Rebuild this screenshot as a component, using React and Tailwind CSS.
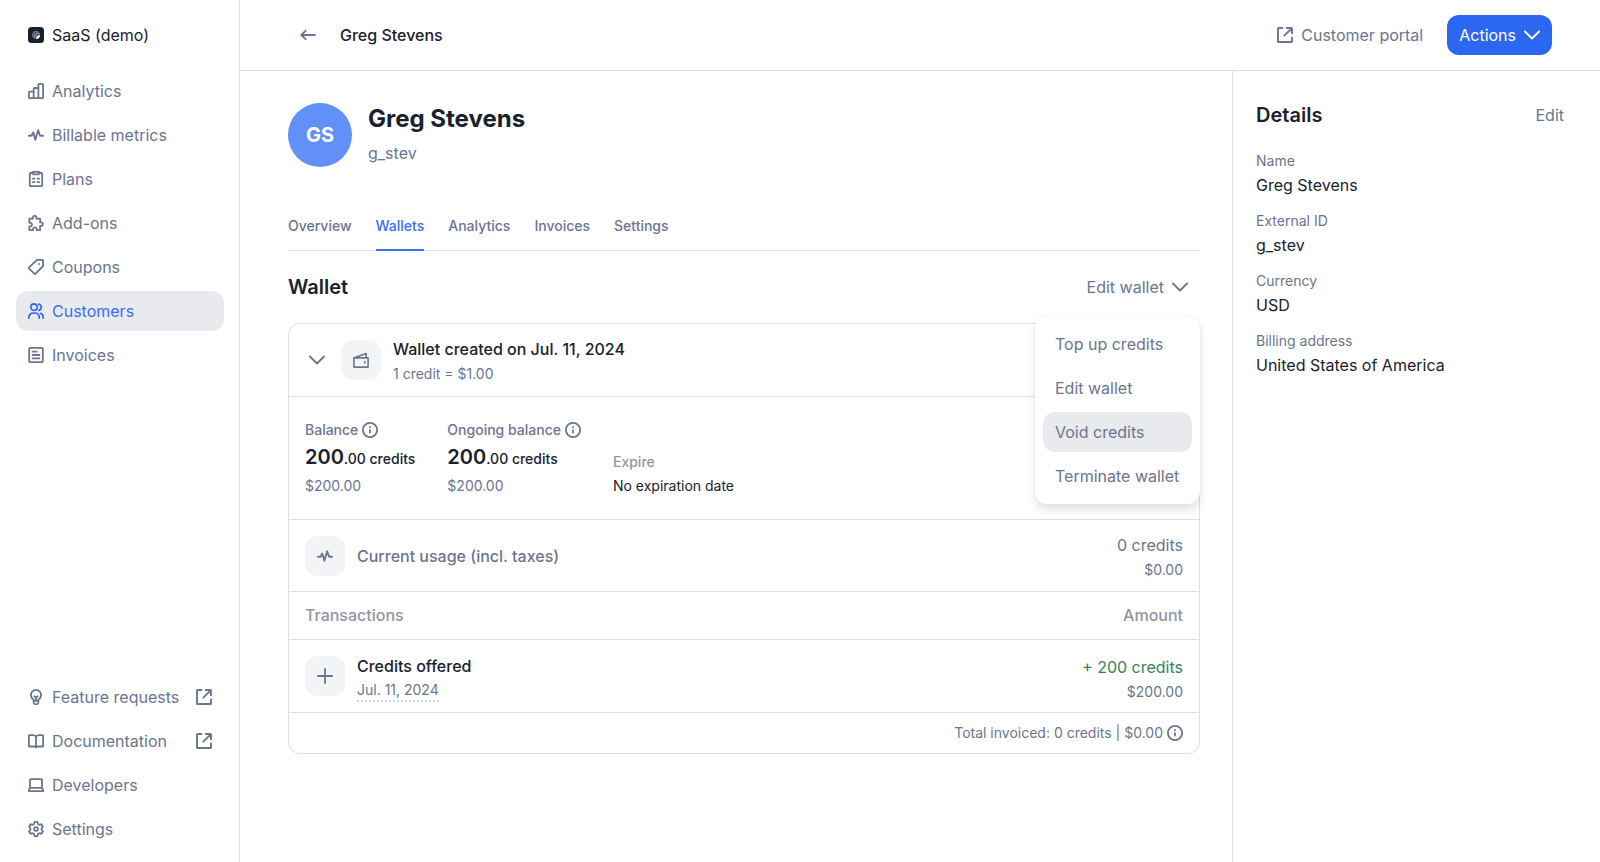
import React from 'react';

function Icon({ children, weight = 1.8 }) {
  return (
    <svg
      aria-hidden="true"
      viewBox="0 0 16 16"
      fill="none"
      stroke="currentColor"
      strokeWidth={weight}
      strokeLinejoin="round"
      strokeLinecap="round"
      className="size-4 shrink-0"
    >
      {children}
    </svg>
  );
}

const LogoIcon = () => (
  <svg aria-hidden="true" viewBox="0 0 16 16" className="size-4 shrink-0">
    <rect width="16" height="16" rx="3.5" fill="#19212e" />
    <circle cx="8" cy="8" r="4" fill="#4a515d" />
    <path d="M4.800 9.600A4 4 0 0 1 10.200 4.700" fill="none" stroke="#7d838d" strokeWidth="1" />
    <path d="M6.400 10.600A4 4 0 0 1 11.400 6.400" fill="none" stroke="#b5b9c0" strokeWidth="1" />
    <path d="M8 12a4 4 0 0 0 4-4c-2.200 0-4 1.600-4 4Z" fill="#fff" />
  </svg>
);

const AnalyticsIcon = () => (
  <Icon>
    <path d="M.9 9.400a.7.7 0 0 1 .7-.7H5.700v6.400H1.600a.7.7 0 0 1-.7-.7ZM5.700 15.100V5.700a.7.7 0 0 1 .7-.7h4v10.100ZM10.400 15.100V1.600a.7.7 0 0 1 .7-.7h3.300a.7.7 0 0 1 .7.7v12.800a.7.7 0 0 1-.7.7Z" />
  </Icon>
);

const PulseIcon = () => (
  <Icon weight={1.9}>
    <path d="M.9 8.700h2.600L5.300 5.600l2 7.200L10.200 3.200l1.900 5.500h3" />
  </Icon>
);

const PlansIcon = () => (
  <Icon>
    <path d="M4.700 2H2.500a.7.7 0 0 0-.7.700v11.700c0 .4.300.7.700.7h11a.7.7 0 0 0 .7-.7V2.700a.7.7 0 0 0-.7-.7h-2.200" />
    <path d="M4.800.9h6.400v1.400a1 1 0 0 1-1 1H5.800a1 1 0 0 1-1-1Z" />
    <path d="M4.900 7.700h1.500M9.600 7.700h1.500M4.900 11.200h1.500M9.600 11.200h1.500" />
  </Icon>
);

const PuzzleIcon = () => (
  <Icon>
    <path d="M1.300 3.700h3.400c.3 0 .4-.2.3-.5a1.800 1.800 0 1 1 3.400 0c-.1.300 0 .5.3.5h3.400v3.400c0 .3.200.4.500.3a1.800 1.800 0 1 1 0 3.400c-.3-.1-.5 0-.5.300v4H8.900c-.3 0-.4-.2-.3-.5a1.800 1.800 0 1 0-3.500 0c.1.300 0 .5-.3.500H1.300v-3.500c0-.3.200-.4.500-.3a1.800 1.800 0 1 0 0-3.500c-.3.100-.5 0-.5-.3Z" />
  </Icon>
);

const TagIcon = () => (
  <Icon>
    <path d="M9 .9h5.400c.4 0 .7.300.7.700V7L7.600 14.700a.9.9 0 0 1-1.300 0L1.100 9.600a.9.9 0 0 1 0-1.300Z" />
    <circle cx="11.200" cy="4.900" r="1" fill="currentColor" stroke="none" />
  </Icon>
);

const UsersIcon = () => (
  <Icon>
    <circle cx="6" cy="4.200" r="3.200" />
    <path d="M.9 15.100v-1a4 4 0 0 1 4-4h2.300a4 4 0 0 1 4 4v1" />
    <path d="M10.800 1.100a3.200 3.200 0 0 1 0 6.200M12.500 10.300a3.700 3.700 0 0 1 2.600 3.500v1.300" />
  </Icon>
);

const InvoiceIcon = () => (
  <Icon>
    <rect x="1.200" y=".9" width="13.600" height="14.200" rx=".7" />
    <path d="M4.600 4.700h4.200M4.600 8h6.800M4.600 11.300h6.800" />
  </Icon>
);

const BulbIcon = () => (
  <Icon>
    <path d="M5.600 11.900v-1.400A5.100 5.100 0 1 1 10.400 10.500v1.400" />
    <path d="M5.600 11.900h4.800v1a2.400 2.400 0 0 1-4.800 0ZM8 11.700V8.500M6.300 7.300 8 8.600l1.700-1.300" />
  </Icon>
);

const BookIcon = () => (
  <Icon>
    <path d="M8 3.500C7.200 2.600 6.200 2.200 5 2.200H1.500a.6.6 0 0 0-.6.600v10.100c0 .3.300.6.600.6H6.200c.8 0 1.400.3 1.800.9.400-.6 1-.9 1.800-.9h4.700a.6.6 0 0 0 .6-.6V2.800a.6.6 0 0 0-.6-.6H11c-1.200 0-2.200.4-3 1.300ZM8 3.500v10.600" />
  </Icon>
);

const LaptopIcon = () => (
  <Icon>
    <path d="M2 10.900V2.900c0-.4.300-.7.700-.7h10.600c.4 0 .7.300.7.700v8Z" />
    <path d="M2 10.900.9 13v1.200h14.200V13L14 10.900" />
  </Icon>
);

const GearIcon = () => (
  <Icon>
    <path d="M6.600.9h2.800l.5 2 1.500.9 2-.6 1.600 2.500-1.400 1.500v1.600l1.400 1.500-1.600 2.500-2-.6-1.500.9-.5 2H6.600l-.5-2-1.500-.9-2 .6L1 10.300l1.400-1.500V7.200L1 5.700l1.600-2.500 2 .6 1.500-.9Z" />
    <circle cx="8" cy="8" r="1.900" />
  </Icon>
);

const ExternalIcon = () => (
  <Icon weight={1.9}>
    <path d="M5.400 1H1.600a.6.6 0 0 0-.6.600v12.800c0 .3.300.6.600.6h12.800a.6.6 0 0 0 .6-.6v-3.900" />
    <path d="M9.800 1h4.600c.3 0 .6.300.6.600v4.600M14.400 1.600 7.300 8.700" />
  </Icon>
);

const ArrowLeftIcon = () => (
  <Icon>
    <path d="M15 8H1.200M5.600 3.800 1.200 8l4.400 4.200" />
  </Icon>
);

const ChevronIcon = () => (
  <Icon>
    <path d="m.9 4.500 7.100 7 7.100-7" />
  </Icon>
);

const WalletIcon = () => (
  <Icon weight={1.6}>
    <path d="M.9 5.900h14.200v9.200H.9ZM1.200 5.700l12-4.100v4" />
    <path d="M11.700 9.900v1.200" />
  </Icon>
);

const PlusIcon = () => (
  <Icon>
    <path d="M8 .9v14.200M.9 8h14.200" />
  </Icon>
);

const InfoIcon = () => (
  <Icon>
    <circle cx="8" cy="8" r="7.100" />
    <path d="M8 7.500v3.800" strokeLinecap="butt" />
    <circle cx="8" cy="5.200" r="1" fill="currentColor" stroke="none" />
  </Icon>
);

const primaryNav = [
  { label: 'Analytics', icon: AnalyticsIcon },
  { label: 'Billable metrics', icon: PulseIcon },
  { label: 'Plans', icon: PlansIcon },
  { label: 'Add-ons', icon: PuzzleIcon },
  { label: 'Coupons', icon: TagIcon },
  { label: 'Customers', icon: UsersIcon, active: true },
  { label: 'Invoices', icon: InvoiceIcon },
];

const secondaryNav = [
  { label: 'Feature requests', icon: BulbIcon, external: true },
  { label: 'Documentation', icon: BookIcon, external: true },
  { label: 'Developers', icon: LaptopIcon },
  { label: 'Settings', icon: GearIcon },
];

const tabs = ['Overview', 'Wallets', 'Analytics', 'Invoices', 'Settings'];

const menuItems = ['Top up credits', 'Edit wallet', 'Void credits', 'Terminate wallet'];

const details = [
  ['Name', 'Greg Stevens'],
  ['External ID', 'g_stev'],
  ['Currency', 'USD'],
  ['Billing address', 'United States of America'],
];

function NavList({ items, label }) {
  return (
    <nav aria-label={label} className="flex flex-col gap-1">
      {items.map(({ label: text, icon: ItemIcon, active, external }) => (
        <a
          key={text}
          href="#"
          aria-current={active ? 'page' : undefined}
          className={`flex h-10 items-center gap-2 rounded-xl px-3 ${
            active ? 'bg-[#e8eaed] text-[#3b6df6]' : 'text-[#6b7590]'
          }`}
        >
          <ItemIcon />
          <span className="flex-1">{text}</span>
          {external && <ExternalIcon />}
        </a>
      ))}
    </nav>
  );
}

function Tile({ children }) {
  return (
    <div className="flex size-10 shrink-0 items-center justify-center rounded-xl bg-[#f3f4f6] text-[#6b7590]">
      {children}
    </div>
  );
}

function Balance({ label }) {
  return (
    <div className="flex flex-col gap-[3px]">
      <div className="flex h-5 items-center gap-1 text-sm font-medium text-[#6b7590]">
        {label}
        <InfoIcon />
      </div>
      <div className="text-sm/7 font-medium">
        <span className="text-xl/7 font-semibold">200</span>.00 credits
      </div>
      <div className="text-sm/5 text-[#6b7590]">$200.00</div>
    </div>
  );
}

function WalletCard() {
  return (
    <section className="rounded-xl border border-[#dcdfe4]">
      <div className="flex h-[73px] items-center gap-3 border-b border-[#dcdfe4] px-4">
        <button type="button" aria-label="Collapse wallet" className="flex w-6 justify-center py-3 text-[#6b7590]">
          <ChevronIcon />
        </button>
        <Tile>
          <WalletIcon />
        </Tile>
        <div className="flex flex-col gap-[3px] pt-px">
          <h3 className="text-base/6 font-medium">Wallet created on Jul. 11, 2024</h3>
          <p className="text-sm/5 text-[#6b7590]">1 credit = $1.00</p>
        </div>
      </div>

      <div className="flex h-[123px] items-center border-b border-[#dcdfe4] px-4">
        <div className="flex items-end gap-8">
          <Balance label="Balance" />
          <Balance label="Ongoing balance" />
          <div className="flex flex-col gap-1 text-sm/5">
            <div className="font-medium text-[#9195a6]">Expire</div>
            <div>No expiration date</div>
          </div>
        </div>
      </div>

      <div className="flex h-18 items-center gap-3 border-b border-[#dcdfe4] px-4 text-[#6b7590]">
        <Tile>
          <PulseIcon />
        </Tile>
        <div className="flex-1 font-medium">Current usage (incl. taxes)</div>
        <div className="flex flex-col gap-[3px] pt-px text-right">
          <div className="text-base/6">0 credits</div>
          <div className="text-sm/5">$0.00</div>
        </div>
      </div>

      <table className="w-full border-collapse">
        <thead>
          <tr className="h-[47px] border-b border-[#dcdfe4] text-[#9195a6]">
            <th className="px-4 text-left font-medium">Transactions</th>
            <th className="px-4 text-right font-medium">Amount</th>
          </tr>
        </thead>
        <tbody>
          <tr className="h-[73px] border-b border-[#dcdfe4]">
            <td className="px-4">
              <div className="flex items-center gap-3">
                <Tile>
                  <PlusIcon />
                </Tile>
                <div className="flex flex-col items-start gap-0.5 pt-1">
                  <div className="text-base/6 font-medium">Credits offered</div>
                  <div className="border-b-2 border-dotted border-[#cdd1da] text-sm/5 text-[#6b7590]">Jul. 11, 2024</div>
                </div>
              </div>
            </td>
            <td className="px-4 text-right">
              <div className="flex flex-col gap-[3px] pt-1.5">
                <div className="text-base/6 text-[#34845a]">+ 200 credits</div>
                <div className="text-sm/5 text-[#6b7590]">$200.00</div>
              </div>
            </td>
          </tr>
        </tbody>
      </table>

      <div className="flex h-10 items-center justify-end gap-1 px-4 text-sm text-[#6b7590]">
        Total invoiced: 0 credits | $0.00
        <InfoIcon />
      </div>
    </section>
  );
}

export default function App() {
  return (
    <div className="flex min-h-screen bg-white font-['Inter',sans-serif] text-base/6 text-[#19212e]">
      <aside className="flex w-60 shrink-0 flex-col border-r border-[#dcdfe4] pt-[15px] pr-[15px] pb-[13px] pl-4">
        <button type="button" className="mb-4 flex h-10 items-center gap-2 px-3">
          <LogoIcon />
          SaaS (demo)
        </button>
        <NavList items={primaryNav} label="Main" />
        <div className="mt-auto">
          <NavList items={secondaryNav} label="Resources" />
        </div>
      </aside>

      <div className="flex min-w-0 flex-1 flex-col">
        <header className="flex h-[71px] shrink-0 items-center justify-between border-b border-[#dcdfe4] px-12">
          <div className="flex items-center gap-3">
            <button type="button" aria-label="Back" className="flex size-10 items-center justify-center text-[#6b7590]">
              <ArrowLeftIcon />
            </button>
            <span className="font-medium">Greg Stevens</span>
          </div>
          <div className="flex items-center gap-3">
            <a href="#" className="flex h-10 items-center gap-2 px-3 text-[#6b7590]">
              <ExternalIcon />
              Customer portal
            </a>
            <button type="button" className="flex h-10 items-center gap-2 rounded-xl bg-[#2c67f2] px-3 text-white">
              Actions
              <ChevronIcon />
            </button>
          </div>
        </header>

        <div className="flex flex-1">
          <main className="min-w-0 flex-1 px-8 pt-8 pl-12">
            <div className="flex gap-4">
              <div className="flex size-16 items-center justify-center rounded-full bg-[#6090f8] text-xl font-bold text-white">
                GS
              </div>
              <div className="flex flex-col gap-1.5">
                <h1 className="text-2xl/8 font-bold">Greg Stevens</h1>
                <p className="text-[#6b7590]">g_stev</p>
              </div>
            </div>

            <nav aria-label="Customer sections" className="mt-8 flex gap-6 border-b border-[#dcdfe4] text-sm font-medium">
              {tabs.map((tab) => (
                <a
                  key={tab}
                  href="#"
                  aria-current={tab === 'Wallets' ? 'page' : undefined}
                  className={`-mb-px flex h-[52px] items-center border-b-2 pt-1 ${
                    tab === 'Wallets' ? 'border-[#3b6df6] text-[#3b6df6]' : 'border-transparent text-[#6b7590]'
                  }`}
                >
                  {tab}
                </a>
              ))}
            </nav>

            <div className="flex h-18 items-center justify-between">
              <h2 className="text-xl font-semibold">Wallet</h2>
              <div className="relative">
                <button
                  type="button"
                  aria-expanded="true"
                  aria-haspopup="menu"
                  className="flex h-10 items-center gap-2 px-3 text-[#6b7590]"
                >
                  Edit wallet
                  <ChevronIcon />
                </button>
                <div
                  role="menu"
                  className="absolute top-full right-0 z-10 mt-[9px] flex min-w-[165px] flex-col gap-1 rounded-xl bg-white p-2 shadow-[0_6px_8px_0_#19212e1f,0_0_2px_0_#19212e14]"
                >
                  {menuItems.map((item) => (
                    <button
                      key={item}
                      type="button"
                      role="menuitem"
                      className={`h-10 rounded-xl px-3 text-left whitespace-nowrap text-[#6b7590] ${
                        item === 'Void credits' ? 'bg-[#e8eaed]' : ''
                      }`}
                    >
                      {item}
                    </button>
                  ))}
                </div>
              </div>
            </div>

            <WalletCard />
          </main>

          <aside className="w-92 shrink-0 border-l border-[#dcdfe4] pt-6 pr-6 pl-[23px]">
            <div className="flex h-10 items-center justify-between">
              <h2 className="text-xl font-semibold">Details</h2>
              <button type="button" className="h-10 px-3 text-[#6b7590]">
                Edit
              </button>
            </div>
            <dl className="mt-3.5 flex flex-col gap-3">
              {details.map(([term, value]) => (
                <div key={term}>
                  <dt className="text-sm/6 text-[#6b7590]">{term}</dt>
                  <dd>{value}</dd>
                </div>
              ))}
            </dl>
          </aside>
        </div>
      </div>
    </div>
  );
}
